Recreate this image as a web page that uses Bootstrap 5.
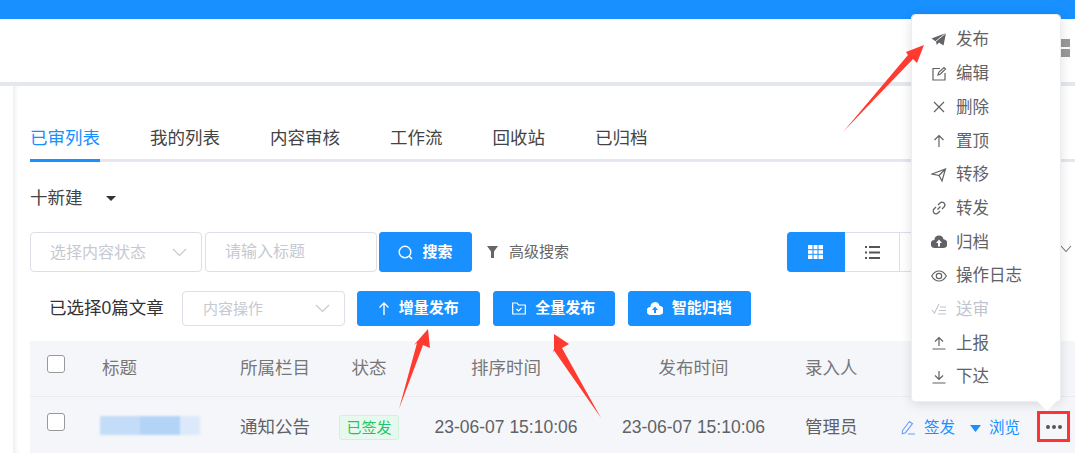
<!DOCTYPE html>
<html lang="zh-CN">
<head>
    <meta charset="UTF-8">
    <meta name="viewport" content="width=device-width, initial-scale=1.0">
    <title>内容管理</title>
    <link href="https://cdn.jsdelivr.net/npm/bootstrap@5.3.0/dist/css/bootstrap.min.css" rel="stylesheet">
    <style>
        html, body {
            height: 453px;
            overflow: hidden;
        }
        body {
            font-family: "Liberation Sans", "Noto Sans CJK SC", sans-serif;
            color: #555;
            background: #fff;
            position: relative;
        }
        .top-strip { height: 19px; background: #1890ff; }
        .head-strip {
            height: 67px;
            background: #fff;
            border-bottom: 4px solid #e4e7ed;
            position: relative;
        }
        .head-squares {
            position: absolute;
            left: 1061px;
            top: 20px;
            width: 9px;
            height: 18px;
            background: linear-gradient(#999 0 8px, #fff 8px 10px, #999 10px);
        }
        .page-body { height: 367px; }
        .side-strip { width: 13px; flex: none; }
        .main-area {
            flex: 1;
            min-width: 0;
            padding-left: 17px;
            box-shadow: inset 5px 0 5px -3px #e9ebf0;
        }
        .tab-row {
            margin-top: 33px;
            border-bottom: 3px solid #e4e7ed;
            gap: 50px;
            height: 43px;
        }
        .tab-link {
            display: block;
            height: 43px;
            font-size: 17.5px;
            line-height: 38px;
            color: #444;
            text-decoration: none;
        }
        .tab-link.tab-on {
            color: #1890ff;
            border-bottom: 3px solid #1890ff;
        }
        .new-row {
            margin-top: 24px;
            height: 24px;
            font-size: 17.5px;
            color: #444;
            line-height: 24px;
        }
        .caret-down {
            width: 0;
            height: 0;
            margin-left: 23px;
            border: 5px solid transparent;
            border-top: 5px solid #333;
            border-bottom: 0;
        }
        .filter-row { margin-top: 22px; height: 40px; }
        .field-box {
            border: 1px solid #dcdfe6;
            border-radius: 4px;
            color: #c6c9d1;
            font-size: 16px;
            background: #fff;
        }
        .field-box span, .field-title { padding-top: 2px; }
        .field-status { width: 172px; height: 40px; padding: 0 14px 0 19px; margin-right: 3px; }
        .field-title { width: 172px; height: 40px; padding: 0 19px; margin-right: 2px; }
        .field-action { width: 163px; height: 35px; padding: 0 14px 0 20px; font-size: 15px; }
        .blue-btn {
            --bs-btn-bg: #1890ff;
            --bs-btn-border-color: #1890ff;
            --bs-btn-hover-bg: #1890ff;
            --bs-btn-hover-border-color: #1890ff;
            --bs-btn-padding-x: 0;
            --bs-btn-padding-y: 0;
            --bs-btn-font-size: 15px;
            --bs-btn-border-radius: 3px;
            font-weight: 600;
            gap: 9px;
        }
        .btn-search { width: 93px; height: 40px; margin-left: 0; }
        .btn-publish { height: 35px; margin-left: 13px; width: 122.5px; }
        .field-action + .btn-publish { margin-left: 12px; }
        .adv-link { margin-left: 15px; font-size: 15px; color: #666; gap: 11px; }
        .view-group { position: absolute; left: 787px; top: 232px; height: 40px; }
        .view-cell {
            width: 55px;
            height: 40px;
            border: 1px solid #dcdfe6;
            border-left: 0;
        }
        .view-cell.view-on { width: 58px; background: #1890ff; border-color: #1890ff; border-radius: 4px 0 0 4px; }
        .chevron-far { position: absolute; left: 1060px; top: 245px; }
        .action-row { margin-top: 19px; height: 35px; padding-left: 19px; }
        .picked-text { font-size: 17.5px; color: #333; width: 133px; white-space: nowrap; }
        .list-table {
            --bs-table-bg: #f5f6fa;
            width: 1045px;
            table-layout: fixed;
            margin: 15px 0 0;
            font-size: 17.5px;
            color: #606266;
        }
        .list-table th, .list-table td {
            padding: 0;
            vertical-align: middle;
            font-weight: 400;
            color: #606266;
            white-space: nowrap;
            border-bottom: 1px solid #e9ebf0;
        }
        .list-table th { height: 55px; color: #777; }
        .list-table td { height: 60px; border-bottom: 0; padding-top: 2px; }
        .pick-box {
            width: 18px;
            height: 18px;
            display: block;
            margin: 0 0 8px 17px;
            border: 1px solid #999;
            border-radius: 3px;
            background: #fff;
        }
        .list-table td .pick-box { margin-bottom: 10px; }
        .pad-l { padding-left: 17px !important; }
        .pad-name { padding-left: 14px !important; }
        .blur-title {
            width: 100px;
            height: 19px;
            margin: 0 0 4px -2px;
            background: linear-gradient(90deg, #c3dcf8 0 40%, #b4d4f7 40% 80%, #dce9fa 80%);
            filter: blur(1px);
        }
        .sign-tag {
            display: inline-block;
            width: 60px;
            height: 25px;
            line-height: 23px;
            font-size: 15px;
            color: #1fc465;
            background: #e7f9ee;
            border: 1px solid #d0f2dd;
            border-radius: 3px;
            text-align: center;
        }
        .row-link { color: #1890ff; font-size: 15.5px; text-decoration: none; gap: 8px; }
        .row-links { gap: 15px; }
        .more-box {
            position: absolute;
            left: 1037px;
            top: 411px;
            width: 33px;
            height: 31px;
            border: 3px solid #f33;
            gap: 2px;
        }
        .more-box i { width: 4px; height: 4px; border-radius: 50%; background: #555; }
        .pop-menu {
            --bs-dropdown-min-width: 0;
            --bs-dropdown-border-color: #eceef2;
            --bs-dropdown-border-radius: 4px;
            --bs-dropdown-item-padding-x: 19px;
            --bs-dropdown-item-padding-y: 0;
            --bs-dropdown-link-color: #606266;
            --bs-dropdown-link-disabled-color: #c0c4cc;
            position: absolute;
            left: 911px;
            top: 14px;
            width: 150px;
            height: 388px;
            padding: 8px 0;
            display: block;
            box-shadow: 0 2px 12px rgba(0, 0, 0, .12);
            z-index: 5;
        }
        .pop-menu .dropdown-item {
            height: 33.7px;
            font-size: 16.5px;
            gap: 9px;
        }
        .pop-menu svg { width: 16px; height: 16px; flex: none; }
        .pop-tip {
            position: absolute;
            left: 128px;
            bottom: -7px;
            width: 14px;
            height: 14px;
            background: #fff;
            transform: rotate(45deg);
            z-index: -1;
        }
        .mark-arrows { position: absolute; left: 0; top: 0; z-index: 6; pointer-events: none; }
    </style>
</head>
<body>
    <div class="top-strip"></div>
    <div class="head-strip"><div class="head-squares"></div></div>

    <div class="page-body d-flex">
        <div class="side-strip"></div>
        <div class="main-area">
            <!-- tabs -->
            <nav class="tab-row d-flex">
                <a class="tab-link tab-on" href="#">已审列表</a>
                <a class="tab-link" href="#">我的列表</a>
                <a class="tab-link" href="#">内容审核</a>
                <a class="tab-link" href="#">工作流</a>
                <a class="tab-link" href="#">回收站</a>
                <a class="tab-link" href="#">已归档</a>
            </nav>

            <div class="new-row d-flex align-items-center">
                <span>十新建</span><span class="caret-down"></span>
            </div>

            <!-- search -->
            <div class="filter-row d-flex align-items-center">
                <div class="field-box field-status d-flex align-items-center justify-content-between">
                    <span>选择内容状态</span>
                    <svg width="15" height="9" viewBox="0 0 15 9" fill="none" stroke="#c6c9d1" stroke-width="1.2"><path d="M1 1l6.5 6.5L14 1"/></svg>
                </div>
                <div class="field-box field-title d-flex align-items-center">请输入标题</div>
                <button class="btn btn-primary blue-btn btn-search d-flex align-items-center justify-content-center">
                    <svg width="15" height="15" viewBox="0 0 15 15" fill="none" stroke="#fff" stroke-width="1.4"><circle cx="7" cy="7" r="5.8"/><path d="M11 11l3 3"/></svg>
                    <span>搜索</span>
                </button>
                <div class="adv-link d-flex align-items-center">
                    <svg width="11" height="12" viewBox="0 0 11 12" fill="#666"><path d="M0 0h11L7 5.5V12H4V5.5z"/></svg>
                    <span>高级搜索</span>
                </div>
            </div>

            <!-- batch actions -->
            <div class="action-row d-flex align-items-center">
                <div class="picked-text">已选择0篇文章</div>
                <div class="field-box field-action d-flex align-items-center justify-content-between">
                    <span>内容操作</span>
                    <svg width="15" height="9" viewBox="0 0 15 9" fill="none" stroke="#c6c9d1" stroke-width="1.2"><path d="M1 1l6.5 6.5L14 1"/></svg>
                </div>
                <button class="btn btn-primary blue-btn btn-publish d-flex align-items-center justify-content-center">
                    <svg width="12" height="13" viewBox="0 0 12 13" fill="none" stroke="#fff" stroke-width="1.4"><path d="M6 13V1M1.5 5.5L6 1l4.5 4.5"/></svg>
                    <span>增量发布</span>
                </button>
                <button class="btn btn-primary blue-btn btn-publish d-flex align-items-center justify-content-center">
                    <svg width="14" height="13" viewBox="0 0 14 13" fill="none" stroke="#fff" stroke-width="1.2"><path d="M.7 2.5V12h12.6V3H6.5L5 1H.7zM4.5 7l2 2 3-3"/></svg>
                    <span>全量发布</span>
                </button>
                <button class="btn btn-primary blue-btn btn-publish d-flex align-items-center justify-content-center">
                    <svg width="16" height="13" viewBox="0 0 16 13"><path fill="#fff" d="M8 0a4.6 4.6 0 0 1 4.5 3.8A4.2 4.2 0 0 1 12 13H4a4 4 0 0 1-.6-8A4.8 4.8 0 0 1 8 0z"/><path fill="#1890ff" d="M8 4.5L5 8h2v3h2V8h2z"/></svg>
                    <span>智能归档</span>
                </button>
            </div>

            <table class="table list-table">
                <colgroup>
                    <col style="width:55px"><col style="width:138px"><col style="width:99px"><col style="width:94px">
                    <col style="width:180px"><col style="width:195px"><col style="width:94px"><col>
                </colgroup>
                <thead>
                    <tr>
                        <th><span class="pick-box"></span></th>
                        <th class="pad-l">标题</th>
                        <th class="pad-l">所属栏目</th>
                        <th class="text-center">状态</th>
                        <th class="text-center">排序时间</th>
                        <th class="text-center">发布时间</th>
                        <th class="pad-name">录入人</th>
                        <th></th>
                    </tr>
                </thead>
                <tbody>
                    <tr>
                        <td><span class="pick-box"></span></td>
                        <td class="pad-l"><div class="blur-title"></div></td>
                        <td class="pad-l">通知公告</td>
                        <td class="text-center"><span class="sign-tag">已签发</span></td>
                        <td class="text-center">23-06-07 15:10:06</td>
                        <td class="text-center">23-06-07 15:10:06</td>
                        <td class="pad-name">管理员</td>
                        <td>
                            <div class="row-links d-flex align-items-center ps-3">
                                <a class="row-link d-flex align-items-center" href="#">
                                    <svg width="15" height="15" viewBox="0 0 15 15" fill="none" stroke="#6f9cf5" stroke-width="1.1"><path d="M1.5 10.5L8.5 1.5l3 2.2-7 9-3.2 1zM7 14h7"/></svg>
                                    <span>签发</span>
                                </a>
                                <a class="row-link d-flex align-items-center" href="#">
                                    <span class="view-caret"><svg width="11" height="7" viewBox="0 0 11 7" fill="#1890ff"><path d="M0 0h11L5.5 7z"/></svg></span>
                                    <span>浏览</span>
                                </a>
                            </div>
                        </td>
                    </tr>
                </tbody>
            </table>
        </div>
    </div>

    <!-- view switch -->
    <div class="view-group d-flex">
        <div class="view-cell view-on d-flex align-items-center justify-content-center">
            <svg width="15" height="14" viewBox="0 0 15 14" fill="#fff"><path d="M0 0h15v14H0z"/><path stroke="#1890ff" d="M5 0v14M10 0v14M0 4.700h15M0 9.300h15"/></svg>
        </div>
        <div class="view-cell d-flex align-items-center justify-content-center">
            <svg width="15" height="13" viewBox="0 0 15 13" fill="#555"><path d="M0 0h2v2H0zM4 0h11v2H4zM0 5.500h2v2H0zM4 5.500h11v2H4zM0 11h2v2H0zM4 11h11v2H4z"/></svg>
        </div>
        <div class="view-cell"></div>
    </div>
    <svg class="chevron-far" width="12" height="8" viewBox="0 0 12 8" fill="none" stroke="#777" stroke-width="1.1"><path d="M1 1l5 5.500L11 1"/></svg>

    <div class="more-box d-flex align-items-center justify-content-center"><i></i><i></i><i></i></div>

    <!-- row menu -->
    <div class="dropdown-menu pop-menu">
        <span class="pop-tip"></span>
        <a class="dropdown-item d-flex align-items-center" href="#">
            <svg viewBox="0 0 16 16"><path fill="#606266" d="M.5 6.500L15 1 12.500 13.500 8 10.500 5.800 13 5 9.500z"/><path fill="none" stroke="#fff" stroke-width=".9" d="M4.800 9.300L15 1"/></svg>发布</a>
        <a class="dropdown-item d-flex align-items-center" href="#">
            <svg viewBox="0 0 16 16" fill="none" stroke="#606266" stroke-width="1.2"><path d="M9 2.500H2v11.500h12V7M7 9l1-3 5-4.500 1.500 1.500-5 5z"/></svg>编辑</a>
        <a class="dropdown-item d-flex align-items-center" href="#">
            <svg viewBox="0 0 16 16" fill="none" stroke="#606266" stroke-width="1.2"><path d="M3 3l10 10M13 3L3 13"/></svg>删除</a>
        <a class="dropdown-item d-flex align-items-center" href="#">
            <svg viewBox="0 0 16 16" fill="none" stroke="#606266" stroke-width="1.2"><path d="M8 14V2.500M3.500 7L8 2.500 12.500 7"/></svg>置顶</a>
        <a class="dropdown-item d-flex align-items-center" href="#">
            <svg viewBox="0 0 16 16" fill="none" stroke="#606266" stroke-width="1.2"><path d="M1 7l13.500-5L11 14 8 8.500zM8 8.500L14.500 2"/></svg>转移</a>
        <a class="dropdown-item d-flex align-items-center" href="#">
            <svg viewBox="0 0 16 16" fill="none" stroke="#606266" stroke-width="1.2"><path d="M6.500 9.500l3-3M7 5l2-2a2.800 2.800 0 0 1 4 4l-2 2M9 11l-2 2a2.800 2.800 0 0 1-4-4l2-2"/></svg>转发</a>
        <a class="dropdown-item d-flex align-items-center" href="#">
            <svg viewBox="0 0 16 16"><path fill="#606266" d="M8 1.500a4.600 4.600 0 0 1 4.500 3.800A4.200 4.200 0 0 1 12 14H4a4 4 0 0 1-.6-8A4.800 4.800 0 0 1 8 1.500z"/><path fill="#fff" d="M8 5.500L5 9h2v3.500h2V9h2z"/></svg>归档</a>
        <a class="dropdown-item d-flex align-items-center" href="#">
            <svg viewBox="0 0 16 16" fill="none" stroke="#606266" stroke-width="1.200"><path d="M.7 8C2.500 4.800 5 3 8 3s5.500 1.800 7.300 5c-1.800 3.200-4.300 5-7.300 5S2.500 11.200.7 8z"/><circle cx="8" cy="8" r="2.700"/></svg>操作日志</a>
        <a class="dropdown-item disabled d-flex align-items-center" href="#">
            <svg viewBox="0 0 16 16" fill="none" stroke="#c0c4cc" stroke-width="1.100"><path d="M1 9l2.500 3L8 3M9 6h6M8 9.500h7M7 13h8"/></svg>送审</a>
        <a class="dropdown-item d-flex align-items-center" href="#">
            <svg viewBox="0 0 16 16" fill="none" stroke="#606266" stroke-width="1.200"><path d="M8 11V2.500M4 6.500l4-4 4 4M1.500 14h13"/></svg>上报</a>
        <a class="dropdown-item d-flex align-items-center" href="#">
            <svg viewBox="0 0 16 16" fill="none" stroke="#606266" stroke-width="1.200"><path d="M8 2v8.500M4 6.500l4 4 4-4M1.500 14h13"/></svg>下达</a>
    </div>

    <!-- annotation arrows -->
    <svg class="mark-arrows" width="1075" height="453" viewBox="0 0 1075 453" fill="#ff3b30">
        <path d="M924 45L917 63 913 59 843 132 908 55 906 52z"/>
        <path d="M428 329L430 348 423 345 399 409 417 343 414 345z"/>
        <path d="M554 334L569 344 562 348 601 418 553 349 554 353z"/>
    </svg>
</body>
</html>
